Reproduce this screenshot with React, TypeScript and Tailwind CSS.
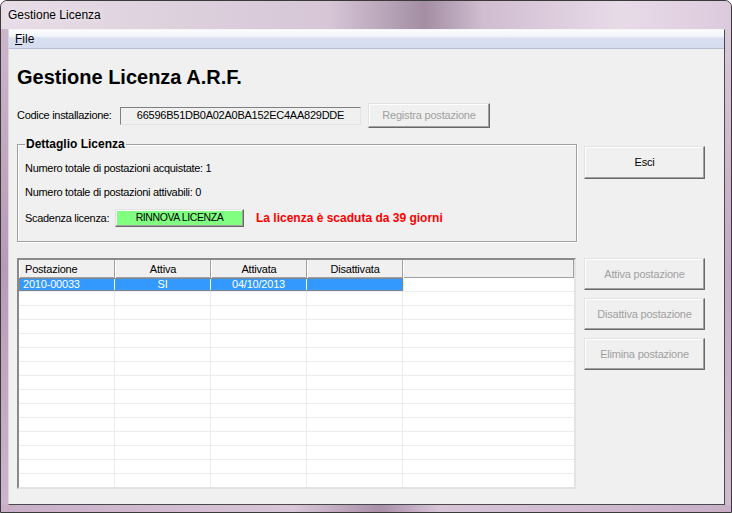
import React from 'react'

const btn =
  'flex items-center justify-center bg-[#f0f0f0] text-[11px] tracking-[-0.2px] border border-t-[#e3e3e3] border-l-[#e3e3e3] border-r-[#696969] border-b-[#696969] shadow-[inset_-1px_-1px_0_#a0a0a0,inset_1px_1px_0_#ffffff]'

const headCell =
  'flex items-center h-full bg-[#f0f0f0] border-r border-r-[#a0a0a0] border-l border-l-white shadow-[inset_0_-1px_0_#a0a0a0]'

const rows = Array.from({ length: 15 }, (_, i) => i)

const App = () => {
  return (
    <div className="w-[732px] h-[513px] overflow-hidden bg-white font-['Liberation_Sans',Arial,sans-serif] text-black">
      <div className="flex h-full w-full flex-col overflow-hidden rounded-t-[7px] border border-[#3a3a3a] bg-[linear-gradient(90deg,#c9a9c7_0%,#d5bfd4_20%,#cdb7cc_45%,#d9c8d8_70%,#cbb2ca_100%)]">
        {/* title bar */}
        <div className="flex h-[28px] items-center bg-[linear-gradient(90deg,#e7dde7_0%,#ddd0dd_25%,#d6c6d6_45%,#a38ea4_58%,#d0bdd0_66%,#e8dbe8_85%,#dccadc_100%)] px-[7px]">
          <span className="text-[12px] [text-shadow:0_0_6px_#fff]">Gestione Licenza</span>
        </div>

        <div className="flex flex-1">
          <div className="w-[7px] bg-[linear-gradient(180deg,#cdb5cc_0%,#b89ab8_50%,#cdb4cc_100%)]" />
          {/* client */}
          <div className="flex flex-1 flex-col border-t border-l border-t-[#f4f4f4] border-l-[#d8d8d8] border-r border-b border-r-[#4a4a4a] border-b-[#4a4a4a] bg-[#f0f0f0]">
            <div className="flex h-[19px] items-center border-b border-[#b7bfd3] bg-[linear-gradient(180deg,#fbfcfe_0%,#f1f4fa_35%,#d9e1f1_45%,#d4dcee_100%)] pl-[6px] text-[12px]">
              <span>
                <span className="underline">F</span>ile
              </span>
            </div>

            <div className="flex flex-col px-[8px]">
              <h1 className="mt-[16px] text-[20px] font-bold leading-[24px]">Gestione Licenza A.R.F.</h1>

              <div className="mt-[14px] flex h-[25px] items-center text-[11px] tracking-[-0.3px]">
                <span className="w-[103px]">Codice installazione:</span>
                <div className="flex h-[18px] w-[241px] items-center justify-center border border-t-[#808080] border-l-[#808080] border-r-[#e3e3e3] border-b-[#e3e3e3] tracking-[-0.25px]">
                  66596B51DB0A02A0BA152EC4AA829DDE
                </div>
                <button className={`${btn} ml-[7px] h-[25px] w-[122px] text-[#a0a0a0]`}>Registra postazione</button>
              </div>

              <div className="mt-[9px] flex items-start">
                <fieldset className="w-[560px] border border-[#a0a0a0] px-[7px] pb-[14px] pt-[11px] text-[11px] tracking-[-0.3px] shadow-[1px_1px_0_#fff,inset_1px_1px_0_#fff]">
                  <legend className="ml-[0px] px-[1px] text-[12px] font-bold leading-[14px] tracking-[0px]">Dettaglio Licenza</legend>
                  <div className="leading-[13px]">Numero totale di postazioni acquistate: 1</div>
                  <div className="mt-[11px] leading-[13px]">Numero totale di postazioni attivabili: 0</div>
                  <div className="mt-[10px] flex h-[18px] items-center">
                    <span className="w-[90px]">Scadenza licenza:</span>
                    <button className="flex h-[18px] w-[129px] items-center justify-center border border-t-[#e3e3e3] border-l-[#e3e3e3] border-r-[#696969] border-b-[#696969] bg-[#80ff80] text-[10.5px] tracking-[-0.4px] shadow-[inset_-1px_-1px_0_#a0a0a0,inset_1px_1px_0_#ffffff]">
                      RINNOVA LICENZA
                    </button>
                    <span className="ml-[12px] text-[12px] font-bold tracking-[0px] text-[#ff0000]">La licenza è scaduta da 39 giorni</span>
                  </div>
                </fieldset>
                <button className={`${btn} ml-[7px] mt-[9px] h-[33px] w-[121px]`}>Esci</button>
              </div>

              <div className="mt-[16px] flex items-start">
                {/* grid */}
                <div className="h-[231px] w-[559px] overflow-hidden border-2 border-t-[#8a8a8a] border-l-[#8a8a8a] border-r-[#e3e3e3] border-b-[#e3e3e3] bg-white text-[11px] tracking-[-0.2px]">
                  <div className="flex h-[18px]">
                    <div className={`${headCell} w-[96px] pl-[5px]`}>Postazione</div>
                    <div className={`${headCell} w-[96px] justify-center`}>Attiva</div>
                    <div className={`${headCell} w-[96px] justify-center`}>Attivata</div>
                    <div className={`${headCell} w-[96px] justify-center`}>Disattivata</div>
                    <div className={`${headCell} flex-1`} />
                  </div>
                  {rows.map((i) =>
                    i === 0 ? (
                      <div key={i} className="flex h-[14px] border-b border-[#ececec]">
                        <div className="flex w-[384px] border border-dotted border-[#c4792a] bg-[#3399ff] text-white">
                          <div className="flex w-[95px] items-center border-r border-white pl-[3px]">2010-00033</div>
                          <div className="flex w-[96px] items-center justify-center border-r border-white">SI</div>
                          <div className="flex w-[96px] items-center justify-center border-r border-white">04/10/2013</div>
                          <div className="flex-1" />
                        </div>
                        <div className="flex-1 border-l border-[#ececec]" />
                      </div>
                    ) : (
                      <div key={i} className="flex h-[14px] border-b border-[#ececec]">
                        <div className="w-[96px] border-r border-[#ececec]" />
                        <div className="w-[96px] border-r border-[#ececec]" />
                        <div className="w-[96px] border-r border-[#ececec]" />
                        <div className="w-[96px] border-r border-[#ececec]" />
                        <div className="flex-1" />
                      </div>
                    )
                  )}
                </div>

                <div className="ml-[8px] flex w-[121px] flex-col gap-[8px] text-[#a0a0a0]">
                  <button className={`${btn} h-[32px] w-[121px]`}>Attiva postazione</button>
                  <button className={`${btn} h-[32px] w-[121px]`}>Disattiva postazione</button>
                  <button className={`${btn} h-[32px] w-[121px]`}>Elimina postazione</button>
                </div>
              </div>
            </div>
          </div>
          <div className="w-[6px] bg-[linear-gradient(180deg,#d9c9d9_0%,#c3a9c3_50%,#d0bcd0_100%)]" />
        </div>
        <div className="h-[7px] bg-[linear-gradient(90deg,#c9aec8_0%,#d9c6d8_40%,#a98fa9_52%,#d8c5d8_60%,#c8b0c8_100%)]" />
      </div>
    </div>
  )
}

export default App
